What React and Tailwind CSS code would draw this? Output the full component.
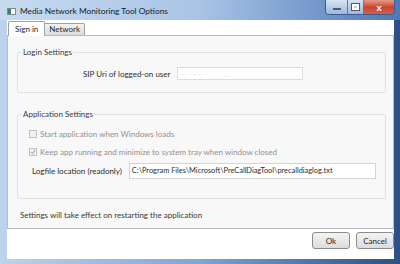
import React from "react";

const font = { fontFamily: 'Lato, "Noto Sans", sans-serif' };

const Checkbox = ({ checked, label }) => (
  <div className="flex items-center gap-[3px] h-[12px]">
    <div className="w-[8px] h-[8px] border border-[#c2c2c2] bg-[#f2f2f2] flex items-center justify-center">
      {checked && (
        <svg width="6" height="6" viewBox="0 0 7 7">
          <path d="M1 3.5 L3 5.5 L6 1" stroke="#a8a8a8" strokeWidth="1.2" fill="none" />
        </svg>
      )}
    </div>
    <span className="text-[#909090] whitespace-nowrap">{label}</span>
  </div>
);

const GroupBox = ({ title, className, children }) => (
  <div className={"relative border border-[#e0e3e6] rounded-[2px] " + className}>
    <span className="absolute -top-[7px] left-[4px] px-[1px] bg-[#f8f8f8] leading-[12px] text-[#3b3b3b] whitespace-nowrap">
      {title}
    </span>
    {children}
  </div>
);

export default function App() {
  return (
    <div
      className="w-[400px] h-[264px] flex flex-col bg-gradient-to-r from-[#bcd3ec] via-[#7fa5d3] to-[#2c4f86] text-[8px] leading-[12px]"
      style={font}
    >
      {/* title bar */}
      <div className="h-[20px] flex items-start bg-gradient-to-r from-[#c7dbf0] via-[#a9c4e6] to-[#4f79b5]">
        <div className="mt-[8px] ml-[7px] w-[9px] h-[7px] bg-white border border-[#7a8a9a] flex">
          <div className="w-[3px] bg-[#2e8b57]" />
        </div>
        <span className="ml-[4px] mt-[5px] text-[8.3px] leading-[13px] text-[#1a1a1a] whitespace-nowrap">
          Media Network Monitoring Tool Options
        </span>
        <div className="ml-auto mr-[5px] flex h-[15px] rounded-b-[4px] border border-t-0 border-[#3d5f8f] overflow-hidden">
          <div className="w-[22px] bg-gradient-to-b from-[#d5e3f3] to-[#9bb8dc] border-r border-[#5a7cab] flex items-end justify-center pb-[4px]">
            <div className="w-[8px] h-[2px] bg-white border border-[#556]" />
          </div>
          <div className="w-[16px] bg-gradient-to-b from-[#d5e3f3] to-[#9bb8dc] border-r border-[#5a7cab] flex items-center justify-center">
            <div className="w-[7px] h-[6px] border-2 border-white outline outline-1 outline-[#556]" />
          </div>
          <div className="w-[30px] bg-gradient-to-b from-[#e59a8a] via-[#c8452f] to-[#d0604a] flex items-center justify-center text-white text-[10px] font-bold leading-none">
            x
          </div>
        </div>
      </div>

      <div className="flex flex-1">
        <div className="w-[7px]" />
        <div className="w-[387px] bg-white flex flex-col">
          {/* tabs */}
          <div className="h-[15px] flex items-end pl-[1px] relative">
            <div className="h-[15px] px-[6px] bg-white border border-b-0 border-[#9aa3ab] rounded-t-[2px] text-[#1e1e1e] leading-[14px] z-10 -mb-[1px]">
              Sign in
            </div>
            <div className="h-[12px] px-[4px] bg-gradient-to-b from-[#f2f2f2] to-[#dcdcdc] border border-l-0 border-b-0 border-[#a0a0a0] rounded-tr-[2px] text-[#2a2a2a] leading-[11px]">
              Network
            </div>
          </div>
          {/* panel */}
          <div className="h-[194px] bg-[#f8f8f8] border border-[#b5bcc3] flex flex-col pt-[16px] pl-[9px] pr-[7px]">
            <GroupBox title="Login Settings" className="h-[41px] flex items-center pt-[2px]">
              <span className="ml-[65px] text-[#2d2d2d] whitespace-nowrap">SIP Uri of logged-on user</span>
              <div className="ml-[7px] w-[126px] h-[13px] bg-white border border-[#dcdcdc] flex items-center pl-[4px] text-[#c8c8c8] text-[7px] whitespace-nowrap">
                - &nbsp; &nbsp; - - &nbsp; &nbsp; &nbsp; &nbsp; &nbsp; &nbsp; . .
              </div>
            </GroupBox>
            <GroupBox title="Application Settings" className="mt-[21px] h-[85px] flex flex-col pt-[13px] pl-[11px]">
              <Checkbox label="Start application when Windows loads" />
              <div className="mt-[6px]">
                <Checkbox checked label="Keep app running and minimize to system tray when window closed" />
              </div>
              <div className="mt-[5px] flex items-center">
                <span className="ml-[3px] text-[#2d2d2d] whitespace-nowrap">Logfile location (readonly)</span>
                <div className="ml-[7px] w-[247px] h-[16px] bg-white border border-[#d4d4d4] flex items-center pl-[2px] text-[#2d2d2d] text-[7.4px] whitespace-nowrap">
                  C:\Program Files\Microsoft\PreCallDiagTool\precalldiaglog.txt
                </div>
              </div>
            </GroupBox>
            <div className="mt-[10px] pl-[3px] text-[#3a3a3a] whitespace-nowrap">
              Settings will take effect on restarting the application
            </div>
          </div>
          {/* buttons */}
          <div className="flex justify-end gap-[6px] pt-[3px]">
            <button className="w-[38px] h-[17px] border border-[#8c8c8c] rounded-[3px] bg-gradient-to-b from-[#f4f4f4] to-[#dcdcdc] text-[#2a2a2a] leading-[14px]">
              Ok
            </button>
            <button className="w-[38px] h-[17px] border border-[#8c8c8c] rounded-[3px] bg-gradient-to-b from-[#f4f4f4] to-[#dcdcdc] text-[#2a2a2a] leading-[14px]">
              Cancel
            </button>
          </div>
        </div>
        <div className="w-[6px]" />
      </div>
      <div className="h-[5px]" />
    </div>
  );
}
